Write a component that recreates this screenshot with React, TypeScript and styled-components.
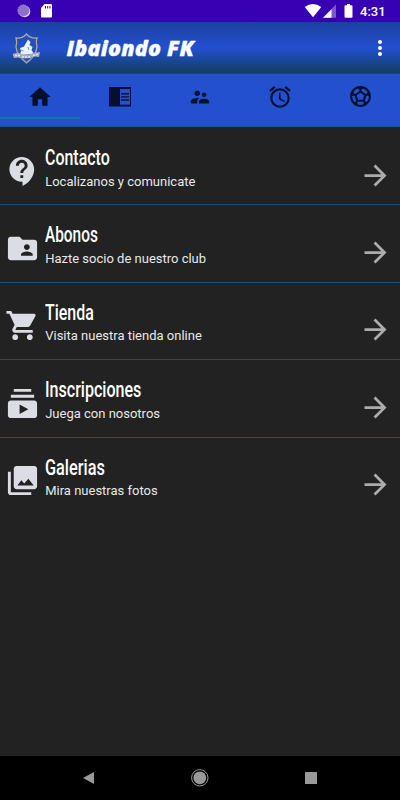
import React from 'react';
import styled, { createGlobalStyle } from 'styled-components';
import type { IconType } from 'react-icons';
import {
  MdAlarm,
  MdArrowForward,
  MdContactSupport,
  MdFolderShared,
  MdHome,
  MdMoreVert,
  MdShoppingCart,
  MdSportsSoccer,
  MdSubscriptions,
  MdSupervisorAccount,
} from 'react-icons/md';

const GlobalStyle = createGlobalStyle`
  * { box-sizing: border-box; }
  body { margin: 0; background: #222; font-family: Roboto, sans-serif; }
  svg { display: block; flex: none; }
`;

const Screen = styled.div`
  width: 400px;
  height: 800px;
  display: flex;
  flex-direction: column;
  overflow: hidden;
  background: #222222;
`;

const StatusBar = styled.div`
  height: 22px;
  flex: none;
  display: flex;
  justify-content: space-between;
  background: #3700b3;
  color: #fff;
`;

const Clock = styled.span`
  width: 40px;
  padding-top: 1px;
  font-size: 13px;
  font-weight: 500;
  line-height: 21px;
`;

const StatusGroup = styled.div`
  display: flex;
`;

const AppBar = styled.header`
  height: 52px;
  flex: none;
  display: flex;
  align-items: center;
  padding: 0 8.5px 0 11px;
  background: linear-gradient(#1c41a0 0%, #2250cf 50%, #133d63 97%, #174b78 100%);
  color: #fff;
`;

const AppTitle = styled.h1`
  margin: 0 auto 0 24.5px;
  font: italic 800 21.5px/28px 'Open Sans', sans-serif;
  letter-spacing: 0.2px;
  -webkit-text-stroke: 0.3px #fff;
  white-space: nowrap;
`;

const Tabs = styled.nav`
  height: 53px;
  flex: none;
  display: grid;
  grid-template-columns: repeat(5, 1fr);
  background: #2250cf;
  border-bottom: 1px solid #14577c;
`;

const Tab = styled.button<{ $active?: boolean }>`
  height: 45px;
  padding: 2px 0 0;
  border: 0;
  border-bottom: 2px solid ${(p) => (p.$active ? '#1276ad' : 'transparent')};
  background: none;
  display: flex;
  justify-content: center;
  align-items: center;
  color: #04102d;
`;

const List = styled.main`
  flex: 1;
  display: flex;
  flex-direction: column;
`;

const Row = styled.div`
  height: 77.4px;
  flex: none;
  display: flex;
  padding: 17px 8px 0 4.5px;
  box-shadow: 0 1px 0 #174f79;

  &:last-child { box-shadow: none; }
`;

const RowIcon = styled.div`
  width: 40.7px;
  padding-top: 9.5px;
  color: #dcdce4;
`;

const RowText = styled.div`
  flex: 1;
`;

const RowTitle = styled.h2<{ $stretch: number }>`
  width: max-content;
  margin: 0;
  font: 500 22px/28px Roboto, sans-serif;
  color: #fff;
  transform: scaleX(${(p) => p.$stretch});
  transform-origin: left;
`;

const RowNote = styled.p`
  margin: 0.6px 0 0;
  font-size: 13px;
  line-height: 18px;
  color: #e8e8e8;
  white-space: nowrap;
`;

const RowArrow = styled.div`
  padding-top: 14.5px;
  color: #acacac;
`;

const NavBar = styled.footer`
  height: 44px;
  flex: none;
  background: #000;
  display: flex;
  justify-content: space-between;
  align-items: center;
  padding: 0 83px;
`;

const Crest = () => (
  <svg width="31" height="32" viewBox="0 0 31 32">
    <path d="M5 6Q11 7 15.500 2Q20 7 26 6Q24.500 10 26 15Q25 24 15.500 31Q6 24 5 15Q6.500 10 5 6Z" fill="#244fc1" stroke="#b1a894" strokeWidth="1.300" />
    <path d="M17 7.500L19.500 10L18.500 13L21.500 15L20.500 18L23 22L9 23L10 19L9 16L13 14.500L15 11Z" fill="#e9f2ff" />
    <path d="M10 18L12.500 19M17 15L18 18" stroke="#7197d6" />
    <path d="M1.500 22L7 20.500Q15 25 22 21L29 20L28 25L24 24.500Q15 28 7 25.500L3 26Z" fill="#a5aebc" />
    <path d="M4 23.500H9M22 23.500L28 22M11 25H20" stroke="#e5e6e8" strokeWidth="1.300" strokeDasharray="2 1" />
    <path d="M10 26L15.500 30L21 26" fill="none" stroke="#8a95ae" />
  </svg>
);

const ReaderIcon: IconType = () => (
  <svg width="22" height="20" viewBox="0 0 22 20">
    <path d="M0 0H22V19.500H0Z" fill="#04102d" />
    <path d="M11 2H21V17.700H11Z" fill="#2250cf" />
    <path d="M12 6.700H20M12 9.900H20M12 13H20" stroke="#04102d" strokeWidth="1.400" />
  </svg>
);

const GalleryIcon: IconType = ({ size }) => (
  <svg width={size} height={size} viewBox="0 0 24 24" fill="currentColor">
    <path fillRule="evenodd" d="M22 16V4C22 2.900 21.100 2 20 2H8C6.900 2 6 2.900 6 4V16C6 17.100 6.900 18 8 18H20C21.100 18 22 17.100 22 16ZM8.500 15.500L11.200 11.800L13.200 14L16 10.800L19.700 15.500Z" />
    <path d="M2 6V20C2 21.100 2.900 22 4 22H18V20H4V6Z" />
  </svg>
);

const StatusLeft = () => (
  <svg width="60" height="22" viewBox="0 0 60 22">
    <circle cx="24.500" cy="11.500" r="5.800" fill="#e3d9f3" />
    <circle cx="23.500" cy="10.500" r="5.700" fill="#8f70ca" stroke="#a98edb" strokeWidth="1" strokeDasharray="1 1" />
    <path d="M44.500 4H51Q52 4 52 5V16.500Q52 17.500 51 17.500H42Q41 17.500 41 16.500V8Z" fill="#fff" />
    <path d="M45.500 6V8.500M47.700 6V8.500M49.900 6V8.500" stroke="#3700b3" />
  </svg>
);

const StatusRight = () => (
  <svg width="60" height="22" viewBox="300 0 60 22">
    <path d="M304.700 7Q313 1 321.300 7L313 17.300Z" fill="#fff" />
    <path d="M336 4.500V17.700H323Z" fill="#7d58cd" />
    <path d="M331.500 9.200V17.700H323Z" fill="#fff" />
    <path d="M347 4H350V5.300H351.500Q352.500 5.300 352.500 6.300V16.700Q352.500 17.700 351.500 17.700H345.500Q344.500 17.700 344.500 16.700V6.300Q344.500 5.300 345.500 5.300H347Z" fill="#fff" />
  </svg>
);

const tabs: { name: string; Icon: IconType; size: number }[] = [
  { name: 'Inicio', Icon: MdHome, size: 26 },
  { name: 'Noticias', Icon: ReaderIcon, size: 22 },
  { name: 'Socios', Icon: MdSupervisorAccount, size: 22 },
  { name: 'Horarios', Icon: MdAlarm, size: 26 },
  { name: 'Partidos', Icon: MdSportsSoccer, size: 25 },
];

const rows: { title: string; note: string; Icon: IconType; stretch: number }[] = [
  { title: 'Contacto', note: 'Localizanos y comunicate', Icon: MdContactSupport, stretch: 0.725 },
  { title: 'Abonos', note: 'Hazte socio de nuestro club', Icon: MdFolderShared, stretch: 0.7 },
  { title: 'Tienda', note: 'Visita nuestra tienda online', Icon: MdShoppingCart, stretch: 0.725 },
  { title: 'Inscripciones', note: 'Juega con nosotros', Icon: MdSubscriptions, stretch: 0.73 },
  { title: 'Galerias', note: 'Mira nuestras fotos', Icon: GalleryIcon, stretch: 0.74 },
];

export default function App() {
  return (
    <Screen>
      <GlobalStyle />
      <StatusBar>
        <StatusLeft />
        <StatusGroup>
          <StatusRight />
          <Clock>4:31</Clock>
        </StatusGroup>
      </StatusBar>
      <AppBar>
        <Crest />
        <AppTitle>Ibaiondo FK</AppTitle>
        <MdMoreVert size={24} />
      </AppBar>
      <Tabs>
        {tabs.map(({ name, Icon, size }, i) => (
          <Tab key={name} aria-label={name} $active={i === 0}>
            <Icon size={size} />
          </Tab>
        ))}
      </Tabs>
      <List>
        {rows.map(({ title, note, Icon, stretch }) => (
          <Row key={title}>
            <RowIcon><Icon size={35} /></RowIcon>
            <RowText>
              <RowTitle $stretch={stretch}>{title}</RowTitle>
              <RowNote>{note}</RowNote>
            </RowText>
            <RowArrow><MdArrowForward size={33} /></RowArrow>
          </Row>
        ))}
      </List>
      <NavBar>
        <svg width="12" height="14" viewBox="0 0 12 14"><path d="M0 7L11 1V13Z" fill="#999" /></svg>
        <svg width="18" height="18" viewBox="0 0 18 18">
          <circle cx="8.800" cy="8.800" r="8.200" fill="none" stroke="#999" />
          <circle cx="8.800" cy="8.800" r="6.400" fill="#999" />
        </svg>
        <svg width="12" height="12" viewBox="0 0 12 12"><rect width="12" height="12" rx="0.500" fill="#999" /></svg>
      </NavBar>
    </Screen>
  );
}
